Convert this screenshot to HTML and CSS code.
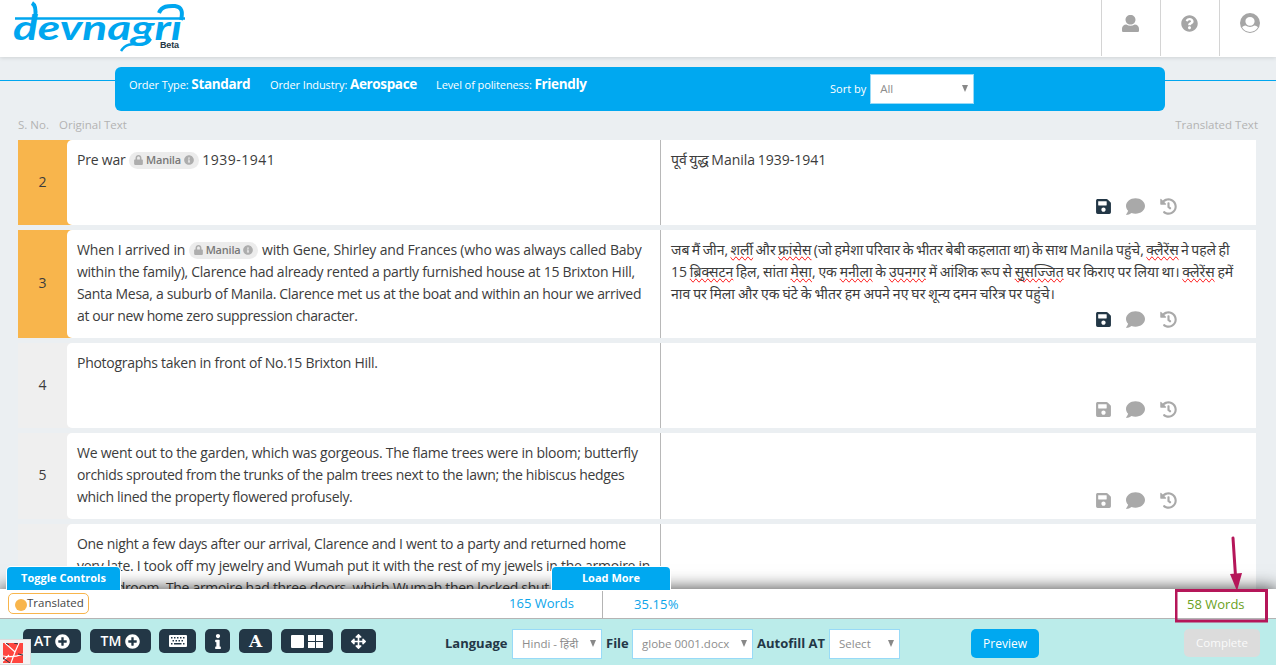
FILE: index.html
```html
<!DOCTYPE html>
<html lang="en">
<head>
<meta charset="utf-8">
<title>Devnagri</title>
<link rel="stylesheet" href="styles.css">
</head>
<body>
<svg class="sprite" aria-hidden="true">
  <symbol id="i-user" viewBox="0 0 512 512"><path d="M256 0c88 0 150 64 150 144S344 288 256 288 106 224 106 144 168 0 256 0zM130 288c75 52 177 52 252 0 75 0 130 50 130 125v51c0 30-18 48-48 48H48c-30 0-48-18-48-48v-51c0-75 55-125 130-125z"/></symbol>
  <symbol id="i-help" viewBox="0 0 512 512"><path d="M504 256c0 136.997-111.043 248-248 248S8 392.997 8 256C8 119.083 119.043 8 256 8s248 111.083 248 248zM262.655 90c-54.497 0-89.255 22.957-116.549 63.758-3.536 5.286-2.353 12.415 2.715 16.258l34.699 26.31c5.205 3.947 12.621 3.008 16.665-2.122 17.864-22.658 30.113-35.797 57.303-35.797 20.429 0 45.698 13.148 45.698 32.958 0 14.976-12.363 22.667-32.534 33.976C247.128 238.528 216 254.941 216 296v4c0 6.627 5.373 12 12 12h56c6.627 0 12-5.373 12-12v-1.333c0-28.462 83.186-29.647 83.186-106.667 0-58.002-60.165-102-116.531-102zM256 338c-25.365 0-46 20.635-46 46 0 25.364 20.635 46 46 46s46-20.636 46-46c0-25.365-20.635-46-46-46z"/></symbol>
  <symbol id="i-account" viewBox="0 0 20 20"><path fill-rule="evenodd" d="M10 0a10 10 0 1 1 0 20 10 10 0 0 1 0-20zM10 4C7.300 4 5.400 5.900 5.400 8.300S7.300 12.800 10 12.800s4.600-2.100 4.600-4.500S12.700 4 10 4zM5.700 12.600C3.700 13.100 2.500 13.500 2.100 14.500 3.700 17.300 6.600 18.900 10 18.900s6.300-1.600 7.900-4.400c-.4-1-1.600-1.400-3.600-1.900-2.300 1.900-6.300 1.900-8.600 0z"/></symbol>
  <symbol id="i-lock" viewBox="0 0 448 512"><path d="M400 224h-24v-72C376 68.200 307.800 0 224 0S72 68.200 72 152v72H48c-26.500 0-48 21.500-48 48v192c0 26.500 21.500 48 48 48h352c26.500 0 48-21.500 48-48V272c0-26.500-21.500-48-48-48zm-104 0H152v-72c0-39.700 32.300-72 72-72s72 32.300 72 72v72z"/></symbol>
  <symbol id="i-info-circle" viewBox="0 0 512 512"><path d="M256 8C119.043 8 8 119.083 8 256c0 136.997 111.043 248 248 248s248-111.003 248-248C504 119.083 392.957 8 256 8zm0 110c23.196 0 42 18.804 42 42s-18.804 42-42 42-42-18.804-42-42 18.804-42 42-42zm56 254c0 6.627-5.373 12-12 12h-88c-6.627 0-12-5.373-12-12v-24c0-6.627 5.373-12 12-12h12v-64h-12c-6.627 0-12-5.373-12-12v-24c0-6.627 5.373-12 12-12h64c6.627 0 12 5.373 12 12v100h12c6.627 0 12 5.373 12 12v24z"/></symbol>
  <symbol id="i-save" viewBox="0 0 448 512"><path d="M433.941 129.941l-83.882-83.882A48 48 0 0 0 316.118 32H48C21.490 32 0 53.490 0 80v352c0 26.510 21.490 48 48 48h352c26.510 0 48-21.490 48-48V163.882a48 48 0 0 0-14.059-33.941zM224 416c-35.346 0-64-28.654-64-64 0-35.346 28.654-64 64-64s64 28.654 64 64c0 35.346-28.654 64-64 64zm96-304.520V212c0 6.627-5.373 12-12 12H76c-6.627 0-12-5.373-12-12V108c0-6.627 5.373-12 12-12h228.520c3.183 0 6.235 1.264 8.485 3.515l3.480 3.480A11.996 11.996 0 0 1 320 111.480z"/></symbol>
  <symbol id="i-comment" viewBox="0 0 512 512"><path d="M256 32C114.600 32 0 125.100 0 240c0 49.600 21.400 95 57 130.700C44.500 421.100 2.700 466 2.200 466.500c-2.200 2.300-2.800 5.700-1.500 8.700S4.800 480 8 480c66.300 0 116-31.800 140.600-51.400 32.700 12.300 69 19.400 107.400 19.400 141.400 0 256-93.100 256-208S397.400 32 256 32z"/></symbol>
  <symbol id="i-history" viewBox="0 0 512 512"><path d="M504 255.531c.253 136.640-111.180 248.372-247.820 248.468-59.015.042-113.223-20.530-155.822-54.911-11.077-8.940-11.905-25.541-1.839-35.607l11.267-11.267c8.609-8.609 22.353-9.551 31.891-1.984C173.062 425.135 212.781 440 256 440c101.705 0 184-82.311 184-184 0-101.705-82.311-184-184-184-48.814 0-93.149 18.969-126.068 49.932l50.754 50.754c10.080 10.080 2.941 27.314-11.313 27.314H24c-8.837 0-16-7.163-16-16V38.627c0-14.254 17.234-21.393 27.314-11.314l49.372 49.372C129.209 34.136 189.552 8 256 8c136.810 0 247.747 110.780 248 247.531zm-180.912 78.784l9.823-12.630c8.138-10.463 6.253-25.542-4.210-33.679L288 256.349V152c0-13.255-10.745-24-24-24h-16c-13.255 0-24 10.745-24 24v135.651l65.409 50.874c10.463 8.137 25.541 6.253 33.679-4.210z"/></symbol>
  <symbol id="i-plus" viewBox="0 0 512 512"><path d="M256 8C119 8 8 119 8 256s111 248 248 248 248-111 248-248S393 8 256 8zm144 276c0 6.600-5.400 12-12 12h-92v92c0 6.600-5.400 12-12 12h-56c-6.600 0-12-5.400-12-12v-92h-92c-6.600 0-12-5.400-12-12v-56c0-6.600 5.400-12 12-12h92v-92c0-6.600 5.400-12 12-12h56c6.600 0 12 5.400 12 12v92h92c6.600 0 12 5.400 12 12v56z"/></symbol>
  <symbol id="i-keyboard" viewBox="0 0 18 12"><path fill-rule="evenodd" d="M1 0h16a1 1 0 0 1 1 1v10a1 1 0 0 1-1 1H1a1 1 0 0 1-1-1V1a1 1 0 0 1 1-1zM2 2v1.500h1.500V2zm3 0v1.500h1.500V2zm3 0v1.500h1.500V2zm3 0v1.500h1.500V2zm3 0v1.500h1.500V2zM3.500 5v1.500H5V5zm3 0v1.500H8V5zm3 0v1.500H11V5zm3 0v1.500H14V5zM2 8v1.500h1.500V8zm3 0v1.500h7.500V8zm9 0v1.500h1.500V8z"/></symbol>
  <symbol id="i-info" viewBox="0 0 192 512"><path d="M20 424.229h20V279.771H20c-11.046 0-20-8.954-20-20V212c0-11.046 8.954-20 20-20h112c11.046 0 20 8.954 20 20v212.229h20c11.046 0 20 8.954 20 20V492c0 11.046-8.954 20-20 20H20c-11.046 0-20-8.954-20-20v-47.771c0-11.046 8.954-20 20-20zM96 0C56.235 0 24 32.235 24 72s32.235 72 72 72 72-32.235 72-72S135.764 0 96 0z"/></symbol>
  <symbol id="i-move" viewBox="0 0 512 512"><path d="M352.201 425.775l-79.196 79.196c-9.373 9.373-24.568 9.373-33.941 0l-79.196-79.196c-15.119-15.119-4.411-40.971 16.971-40.970h51.162L228 284H127.196v51.162c0 21.382-25.851 32.090-40.971 16.971L7.029 272.937c-9.373-9.373-9.373-24.569 0-33.941L86.225 159.800c15.119-15.119 40.971-4.411 40.971 16.971V228H228V127.196h-51.230c-21.382 0-32.090-25.851-16.971-40.971l79.196-79.196c9.373-9.373 24.568-9.373 33.941 0l79.196 79.196c15.119 15.119 4.411 40.971-16.971 40.971h-51.162V228h100.804v-51.162c0-21.382 25.851-32.090 40.970-16.971l79.196 79.196c9.373 9.373 9.373 24.569 0 33.941L425.773 352.200c-15.119 15.119-40.971 4.411-40.970-16.971V284H284v100.804h51.230c21.382 0 32.090 25.851 16.971 40.971z"/></symbol>
</svg>

<header class="header">
  <svg class="logo" width="190" height="57" viewBox="0 0 190 57" role="img" aria-label="devnagri Beta">
    <path class="logo-stroke" d="M15 18.500H185"/>
    <path class="logo-stroke wide" d="M32 3q5 3 3 15M159 13c3-8 11-7 16-7 7 1 8 6 6 14"/>
    <path class="logo-stroke" d="M121 51c5-8 12-7 19-7 6 0 9-2 11-5"/>
    <text class="logo-word" x="13" y="40" textLength="169" lengthAdjust="spacingAndGlyphs">devnagrı</text>
    <text class="logo-beta" x="160" y="48" textLength="19">Beta</text>
  </svg>
  <nav class="header-nav">
    <a class="header-link"><svg width="17" height="17"><use href="#i-user"/></svg></a>
    <a class="header-link"><svg width="17" height="17"><use href="#i-help"/></svg></a>
    <a class="header-link"><svg width="20" height="20"><use href="#i-account"/></svg></a>
  </nav>
</header>

<section class="order">
  <div class="order-bar">
    <span class="order-item order-type">Order Type: <b>Standard</b></span>
    <span class="order-item order-industry">Order Industry: <b>Aerospace</b></span>
    <span class="order-item order-tone">Level of politeness: <b>Friendly</b></span>
    <label class="sort">Sort by <span class="select sort-select">All<i class="caret"></i></span></label>
  </div>
</section>

<div class="columns"><span class="col-no">S. No.</span><span class="col-src">Original Text</span><span class="col-dst">Translated Text</span></div>

<main class="rows">
  <article class="row done r2">
    <div class="num">2</div>
    <div class="source"><p class="a0"><span>Pre war</span> <span class="tag"><svg width="9" height="10"><use href="#i-lock"/></svg>Manila<svg width="10" height="10"><use href="#i-info-circle"/></svg></span> <span class="year">1939-1941</span></p></div>
    <div class="target"><p class="hi a1">पूर्व युद्ध <span class="lat">Manila 1939-1941</span></p>
      <div class="tools"><svg class="save" width="15" height="17"><use href="#i-save"/></svg><svg width="19" height="19"><use href="#i-comment"/></svg><svg width="17" height="17"><use href="#i-history"/></svg></div></div>
  </article>
  <article class="row done r3">
    <div class="num">3</div>
    <div class="source"><p class="b1"><span>When I arrived in</span> <span class="tag"><svg width="9" height="10"><use href="#i-lock"/></svg>Manila<svg width="10" height="10"><use href="#i-info-circle"/></svg></span> <span>with Gene, Shirley and Frances (who was always called Baby</span></p>
      <p class="b2">within the family), Clarence had already rented a partly furnished house at 15 Brixton Hill,</p>
      <p class="b3">Santa Mesa, a suburb of Manila. Clarence met us at the boat and within an hour we arrived</p>
      <p class="b4">at our new home zero suppression character.</p></div>
    <div class="target"><p class="hi h1">जब मैं जीन, <u>शर्ली</u> और <u>फ्रांसेस</u> (जो हमेशा परिवार के भीतर बेबी कहलाता था) के साथ <span class="lat">Manila</span> पहुंचे, <u>क्लैरेंस</u> ने पहले ही</p>
      <p class="hi h2">15 <u>ब्रिक्सटन</u> हिल, सांता <u>मेसा</u>, एक <u>मनीला</u> के <u>उपनगर</u> में आंशिक रूप से <u>सुसज्जित</u> घर किराए पर लिया था। <u>क्लेरेंस</u> हमें</p>
      <p class="hi h3">नाव पर मिला और एक घंटे के भीतर हम अपने नए घर शून्य दमन चरित्र पर पहुंचे।</p>
      <div class="tools"><svg class="save" width="15" height="17"><use href="#i-save"/></svg><svg width="19" height="19"><use href="#i-comment"/></svg><svg width="17" height="17"><use href="#i-history"/></svg></div></div>
  </article>
  <article class="row r4">
    <div class="num">4</div>
    <div class="source"><p class="c1">Photographs taken in front of No.15 Brixton Hill.</p></div>
    <div class="target"><div class="tools"><svg width="15" height="17"><use href="#i-save"/></svg><svg width="19" height="19"><use href="#i-comment"/></svg><svg width="17" height="17"><use href="#i-history"/></svg></div></div>
  </article>
  <article class="row r5">
    <div class="num">5</div>
    <div class="source"><p class="d1">We went out to the garden, which was gorgeous. The flame trees were in bloom; butterfly</p>
      <p class="d2">orchids sprouted from the trunks of the palm trees next to the lawn; the hibiscus hedges</p>
      <p class="d3">which lined the property flowered profusely.</p></div>
    <div class="target"><div class="tools"><svg width="15" height="17"><use href="#i-save"/></svg><svg width="19" height="19"><use href="#i-comment"/></svg><svg width="17" height="17"><use href="#i-history"/></svg></div></div>
  </article>
  <article class="row r6">
    <div class="num"></div>
    <div class="source"><p class="e1">One night a few days after our arrival, Clarence and I went to a party and returned home</p>
      <p class="e2">very late. I took off my jewelry and Wumah put it with the rest of my jewels in the armoire in</p>
      <p class="e3">the bedroom. The armoire had three doors, which Wumah then locked shut.</p></div>
    <div class="target"></div>
  </article>
</main>

<footer class="footer">
  <button class="tab tab-toggle">Toggle Controls</button>
  <button class="tab tab-more">Load More</button>
  <div class="status">
    <span class="legend"><i class="dot"></i>Translated</span>
    <span class="total">165 Words</span>
    <span class="percent">35.15%</span>
    <span class="count">58 Words</span>
  </div>
  <div class="controls">
    <div class="buttons">
      <button class="btn at">AT <svg width="15" height="15"><use href="#i-plus"/></svg></button>
      <button class="btn tm">TM <svg width="15" height="15"><use href="#i-plus"/></svg></button>
      <button class="btn kb"><svg width="18" height="12"><use href="#i-keyboard"/></svg></button>
      <button class="btn nf"><svg width="6" height="15"><use href="#i-info"/></svg></button>
      <button class="btn ft"><b class="serif">A</b></button>
      <button class="btn view"><svg width="32" height="13" viewBox="0 0 32 13"><rect width="13" height="13" rx="1"/><path d="M17 0h7v6h-7zM25 0h7v6h-7zM17 7h7v6h-7zM25 7h7v6h-7z"/></svg></button>
      <button class="btn mv"><svg width="15" height="15"><use href="#i-move"/></svg></button>
    </div>
    <label class="field f-lang"><b>Language</b><span class="select">Hindi - हिंदी<i class="caret"></i></span></label>
    <label class="field f-file"><b>File</b><span class="select">globe 0001.docx<i class="caret"></i></span></label>
    <label class="field f-auto"><b>Autofill AT</b><span class="select">Select<i class="caret"></i></span></label>
    <button class="action preview">Preview</button>
    <button class="action complete">Complete</button>
  </div>
  <div class="corner"><svg width="20" height="20" viewBox="0 0 20 20"><rect width="20" height="20" fill="#ff463f"/><path d="M0 13q10 2 20-2M2 0l10 9 4-9M8 20l4-11M0 18l6-6" fill="none" stroke="#fff" stroke-width="1.200"/><path d="M0 15l7 5M15 11l5 1M11 0l4 1M3 0l3 2" stroke="#263746"/></svg></div>
</footer>

<svg class="callout" width="96" height="90" viewBox="0 0 96 90">
  <path d="M58 4L60.500 42" stroke="#b51659" stroke-width="3" stroke-linecap="round"/>
  <path d="M55 40l12-1-5 18z" fill="#b51659"/>
  <rect x="1" y="56.500" width="90.500" height="30.500" fill="none" stroke="#b51659" stroke-width="3"/>
</svg>
</body>
</html>
```
FILE: styles.css
```css
* { box-sizing: border-box; }
body {
  margin: 0;
  width: 1276px;
  height: 665px;
  overflow: hidden;
  position: relative;
  background: #ebeff2;
  color: #3c3c3c;
  font: 14px/22px "Open Sans", "Noto Sans", sans-serif;
}
p { margin: 0; white-space: nowrap; }
svg { fill: currentColor; flex: none; }
button { border: 0; padding: 0; font: inherit; color: #fff; }
.sprite { position: absolute; width: 0; height: 0; }

.header {
  height: 57px;
  display: flex;
  justify-content: space-between;
  background: #fff;
  box-shadow: 0 1px 4px rgba(0,0,0,.12);
}
.logo { color: #00a6ef; }
.logo-stroke { fill: none; stroke: #00a6ef; stroke-width: 2.500; }
.logo-stroke.wide { stroke-width: 4; }
.logo-word { font: italic 700 35px "Lato", sans-serif; }
.logo-beta { font: 700 9px "Liberation Sans", sans-serif; fill: #243746; }
.header-nav { display: flex; height: 56px; }
.header-link {
  width: 59px;
  border-left: 1px solid #d4d4d4;
  color: #a5a5a5;
  display: flex;
  justify-content: center;
  align-items: center;
  padding: 0 1px 10px 0;
}
.header-link:last-child { width: 57px; padding-left: 5px; }

.order {
  height: 54px;
  padding: 10px 111px 0 115px;
  background: linear-gradient(#00a6ef, #00a6ef) 0 23px / 100% 1px no-repeat;
}
.order-bar {
  height: 44px;
  border-radius: 6px;
  background: #00a8f0;
  color: #fff;
  display: flex;
  padding: 6px 0 0 14px;
  font-size: 11px;
  white-space: nowrap;
}
.order-item { letter-spacing: -.1px; }
.order-item b { font-size: 13.500px; letter-spacing: -.35px; }
.order-type { width: 141px; }
.order-industry { width: 166px; }
.order-tone { width: 394px; }
.sort { display: flex; gap: 4px; line-height: 30px; padding-top: 1px; }
.select {
  display: flex;
  justify-content: space-between;
  align-items: center;
  height: 30px;
  padding: 0 5px 1px 9px;
  border: 1px solid #98daf7;
  background: #fff;
  color: #8d8d8d;
  font-size: 11.500px;
}
.caret { border: 3.500px solid transparent; border-top: 7px solid #888; border-bottom: 0; }
.sort-select { width: 104px; }

.columns { height: 29px; padding: 3px 18px 0 18px; display: flex; color: #b3b3b3; font-size: 11.500px; }
.col-no { width: 41px; }
.col-src { flex: 1; }

.rows { display: flex; flex-direction: column; gap: 5px; padding: 0 20px 0 18px; }
.row { display: flex; height: 85px; background: #efefef; }
.row.done { background: #f8b54c; }
.row.r3 { height: 108px; }
.row.r5 { height: 86px; }
.row.r6 { height: 108px; }
.num { width: 49px; display: flex; align-items: center; justify-content: center; padding-bottom: 2px; }
.source { width: 593px; padding: 9px 0 0 10px; background: #fff; border-radius: 5px 0 0 5px; letter-spacing: -.31px; }
.a0 { letter-spacing: -.2px; }
.year { letter-spacing: .5px; }
.b1 { letter-spacing: -.17px; }
.b2 { letter-spacing: -.27px; }
.b4 { letter-spacing: -.37px; }
.c1 { letter-spacing: -.28px; }
.d1 { letter-spacing: -.25px; }
.d2 { letter-spacing: -.34px; }
.e2 { letter-spacing: -.26px; }
.target {
  flex: 1;
  display: flex;
  flex-direction: column;
  padding: 9px 0 9px 10px;
  background: #fff;
  border-left: 1px solid #b8b8b8;
}
.hi { font-family: "Open Sans", "Noto Sans Devanagari", "Noto Sans", sans-serif; }
.a1 { word-spacing: -1px; }
.h1 { word-spacing: -1.200px; }
.h2 { word-spacing: -.85px; }
.h3 { word-spacing: -.65px; }
.hi u { text-decoration: spelling-error; }
.tag {
  display: inline-flex;
  align-items: center;
  gap: 3px;
  height: 17px;
  padding: 0 5px;
  border-radius: 9px;
  background: #ececec;
  color: #787878;
  font-size: 11px;
  font-weight: 600;
  letter-spacing: -.2px;
  vertical-align: 0;
}
.tag svg { color: #adadad; }
.tools { margin-top: auto; height: 19px; display: flex; align-items: center; padding-left: 425px; color: #a9a9a9; }
.tools svg + svg { margin-left: 15px; }
.tools .save { color: #233746; }
.r4 .tools, .r5 .tools { color: #a9a9a9; }

.footer {
  position: absolute;
  left: 0;
  right: 0;
  top: 589px;
  height: 76px;
  box-shadow: 0 0 16px 1px rgba(0,0,0,.7);
}
.tab {
  position: absolute;
  top: -22px;
  height: 23px;
  background: #00a8f0;
  border-radius: 4px 4px 0 0;
  font-size: 11px;
  line-height: 20px;
  padding-bottom: 2px;
  font-weight: 700;
  box-shadow: 0 0 0 1px #fff;
  white-space: nowrap;
}
.tab-toggle { left: 7px; width: 113px; }
.tab-more { left: 552px; width: 118px; }
.status { height: 30px; background: #fff; border-bottom: 1px solid #b4b4b4; display: flex; align-items: center; color: #0ba5ea; font-size: 13px; }
.legend {
  margin-left: 8px;
  width: 81px;
  height: 21px;
  border: 1px solid #f8b54c;
  border-radius: 5px;
  display: flex;
  align-items: center;
  padding: 0 0 1px 6px;
  color: #454545;
  font-size: 11.500px;
}
.dot { width: 12px; height: 12px; flex: none; border-radius: 50%; background: #f8b54c; margin-top: 4px; }
.total { width: 514px; height: 27px; line-height: 25px; align-self: flex-end; padding-right: 28px; text-align: right; border-right: 1px solid #b4b4b4; }
.percent { margin-left: 31px; flex: 1; letter-spacing: .1px; }
.count { width: 89px; color: #6a9f22; }

.controls { height: 46px; background: #bbecea; display: flex; padding-top: 10px; white-space: nowrap; }
.buttons { display: flex; width: 445px; padding-left: 23px; }
.btn {
  height: 24px;
  border-radius: 5px;
  background: #233746;
  display: flex;
  align-items: center;
  justify-content: center;
  gap: 4px;
  font-weight: 600;
}
.at { width: 58px; margin-right: 9px; }
.tm { width: 61px; margin-right: 8px; }
.kb { width: 37px; margin-right: 9px; }
.nf { width: 25px; margin-right: 9px; }
.ft { width: 33px; margin-right: 9px; }
.view { width: 52px; margin-right: 8px; }
.mv { width: 35px; }
.serif { font: 700 17px "DejaVu Serif", serif; }
.field { display: flex; color: #233746; line-height: 29px; font-size: 13px; }
.field b { flex: none; }
.f-lang { width: 161px; }
.f-lang b { width: 67px; }
.f-lang .select { width: 90px; }
.f-file { width: 151px; }
.f-file b { width: 26px; }
.f-file .select { width: 121px; }
.f-auto { width: 214px; }
.f-auto b { width: 72px; }
.f-auto .select { width: 71px; }
.action { height: 29px; border-radius: 5px; font-size: 12px; }
.preview { width: 68px; background: #00a8f0; margin-right: 145px; }
.complete { width: 76px; height: 28px; background: #dcdcdc; color: #fafafa; font-size: 11.500px; }
.corner { position: absolute; left: 0; bottom: 0; width: 31px; height: 26px; padding: 3px 3px; background: #f3f3f3; border: 1px solid #ddd; border-left: 0; }
.corner svg { display: block; }
.callout { position: absolute; left: 1175px; top: 534px; }
```
